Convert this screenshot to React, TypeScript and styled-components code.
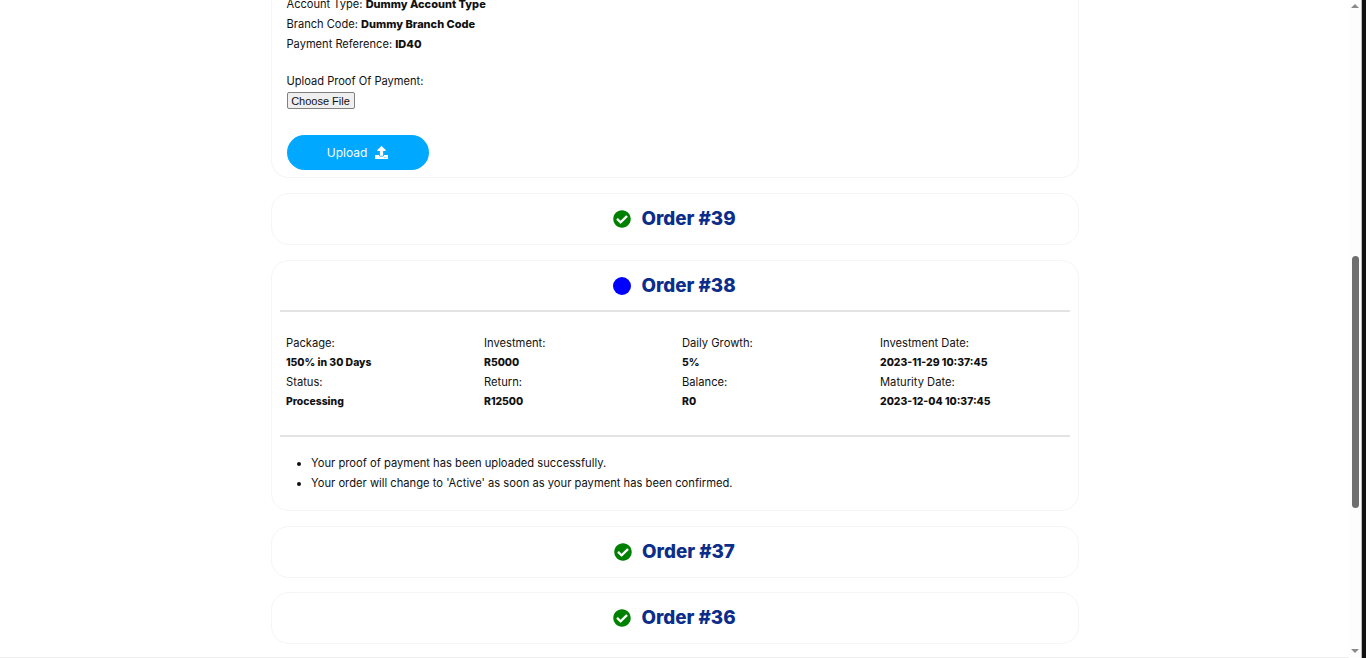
import React from "react";
import styled, { createGlobalStyle } from "styled-components";
import { FaCheckCircle, FaUpload } from "react-icons/fa";

const Global = createGlobalStyle`
  html, body { margin: 0; padding: 0; height: 100%; overflow: hidden; background: #fff; }
  #root { height: 100%; }
`;

const Shell = styled.div`
  display: flex;
  height: 658px;
  width: 1366px;
  font-family: Inter, "Liberation Sans", sans-serif;
  color: #111;
  background: #fff;
`;
const Viewport = styled.div`
  flex: 1;
  min-width: 0;
  height: 657px;
  overflow: hidden;
  border-bottom: 1px solid #efefef;
  display: flex;
  flex-direction: column;
  align-items: center;
`;
const Column = styled.main`
  width: 808px;
  display: flex;
  flex-direction: column;
  gap: 15px;
  flex: none;
`;
const Card = styled.section`
  box-sizing: border-box;
  width: 100%;
  border: 1px solid #f5f5f5;
  border-radius: 18px;
  padding: 0 8px;
  background: #fff;
  flex: none;
`;
const TopCard = styled(Card)`
  margin-top: -20px;
  height: 198px;
  border-top: none;
  padding: 14px 15px 0;
`;
const InfoLine = styled.div`
  font-size: 11.1px;
  line-height: 20px;
  height: 20px;
  strong { font-weight: 800; font-size: 11px; }
`;
const UploadLabel = styled(InfoLine)`
  margin-top: 17px;
`;
const FileButton = styled.button`
  display: block;
  box-sizing: border-box;
  margin-top: 1px;
  width: 68px;
  height: 17px;
  padding: 0;
  background: #efefef;
  border: 1px solid #808080;
  border-radius: 2px;
  font: 11px "Liberation Sans", Arial, sans-serif;
  color: #111;
`;
const UploadButton = styled.button`
  display: flex;
  align-items: center;
  justify-content: center;
  gap: 8px;
  box-sizing: border-box;
  margin-top: 26px;
  width: 142px;
  height: 35px;
  border: none;
  border-radius: 18px;
  background: #00a8ff;
  color: #fff;
  font: 400 12px Inter, sans-serif;
  svg { width: 13px; height: 13px; }
`;
const CollapsedCard = styled(Card)<{ $pull?: boolean }>`
  height: 52px;
  margin-top: ${(p) => (p.$pull ? "-1px" : "0")};
  display: flex;
  align-items: center;
  justify-content: center;
`;
const OpenCard = styled(Card)`
  height: 251px;
`;
const Title = styled.h2`
  margin: 0;
  display: flex;
  align-items: center;
  justify-content: center;
  gap: 10px;
  font-size: 18.8px;
  font-weight: 800;
  color: #0c2d8a;
  line-height: 24px;
  svg { width: 18px; height: 18px; color: #008000; flex: none; }
`;
const OpenHeader = styled.div`
  height: 49px;
  display: flex;
  align-items: center;
  justify-content: center;
  border-bottom: 2px solid #e3e3e3;
`;
const Dot = styled.span`
  display: block;
  width: 18px;
  height: 18px;
  border-radius: 50%;
  background: #0000ff;
  flex: none;
`;
const Grid = styled.div`
  display: grid;
  grid-template-columns: repeat(4, 198px);
  padding: 21.5px 0 22.7px;
  border-bottom: 2px solid #e3e3e3;
`;
const Cell = styled.div`
  padding: 0 6.5px;
  font-size: 11.2px;
  line-height: 19.6px;
  strong { display: block; font-weight: 800; font-size: 10.4px; }
`;
const Notes = styled.ul`
  margin: 16px 0 0;
  padding: 0 0 0 31.5px;
  font-size: 11.2px;
  line-height: 20px;
`;

const cells = [
  ["Package:", "150% in 30 Days"],
  ["Investment:", "R5000"],
  ["Daily Growth:", "5%"],
  ["Investment Date:", "2023-11-29 10:37:45"],
  ["Status:", "Processing"],
  ["Return:", "R12500"],
  ["Balance:", "R0"],
  ["Maturity Date:", "2023-12-04 10:37:45"],
];

const ScrollTrack = styled.div`
  width: 12px;
  flex: none;
  height: 657px;
  display: flex;
  flex-direction: column;
  align-items: center;
  background: #fdfdfd;
`;
const ArrowUp = styled.span`
  margin-top: 4px;
  width: 0;
  height: 0;
  border-left: 4px solid transparent;
  border-right: 4px solid transparent;
  border-bottom: 4px solid #8a8a8a;
`;
const Thumb = styled.span`
  margin-top: 248px;
  width: 7px;
  height: 252px;
  border-radius: 4px;
  background: #6f6f6f;
`;
const ArrowDown = styled.span`
  margin-top: auto;
  margin-bottom: 4px;
  width: 0;
  height: 0;
  border-left: 4px solid transparent;
  border-right: 4px solid transparent;
  border-top: 4px solid #8a8a8a;
`;
const EdgeStrip = styled.div`
  width: 5px;
  flex: none;
  background: #111;
  border-left: 1px solid #bbb;
  box-sizing: border-box;
`;

const Collapsed = ({ n, pull }: { n: number; pull?: boolean }) => (
  <CollapsedCard $pull={pull}>
    <Title>
      <FaCheckCircle />
      Order #{n}
    </Title>
  </CollapsedCard>
);

export default function App() {
  return (
    <Shell>
      <Global />
      <Viewport>
        <Column>
          <TopCard>
            <InfoLine>Account Type: <strong>Dummy Account Type</strong></InfoLine>
            <InfoLine>Branch Code: <strong>Dummy Branch Code</strong></InfoLine>
            <InfoLine>Payment Reference: <strong>ID40</strong></InfoLine>
            <UploadLabel>Upload Proof Of Payment:</UploadLabel>
            <FileButton>Choose File</FileButton>
            <UploadButton>
              Upload
              <FaUpload />
            </UploadButton>
          </TopCard>
          <Collapsed n={39} />
          <OpenCard>
            <OpenHeader>
              <Title>
                <Dot />
                Order #38
              </Title>
            </OpenHeader>
            <Grid>
              {cells.map(([label, value]) => (
                <Cell key={label}>
                  {label}
                  <strong>{value}</strong>
                </Cell>
              ))}
            </Grid>
            <Notes>
              <li>Your proof of payment has been uploaded successfully.</li>
              <li>Your order will change to 'Active' as soon as your payment has been confirmed.</li>
            </Notes>
          </OpenCard>
          <Collapsed n={37} />
          <Collapsed n={36} pull />
        </Column>
      </Viewport>
      <ScrollTrack>
        <ArrowUp />
        <Thumb />
        <ArrowDown />
      </ScrollTrack>
      <EdgeStrip />
    </Shell>
  );
}
